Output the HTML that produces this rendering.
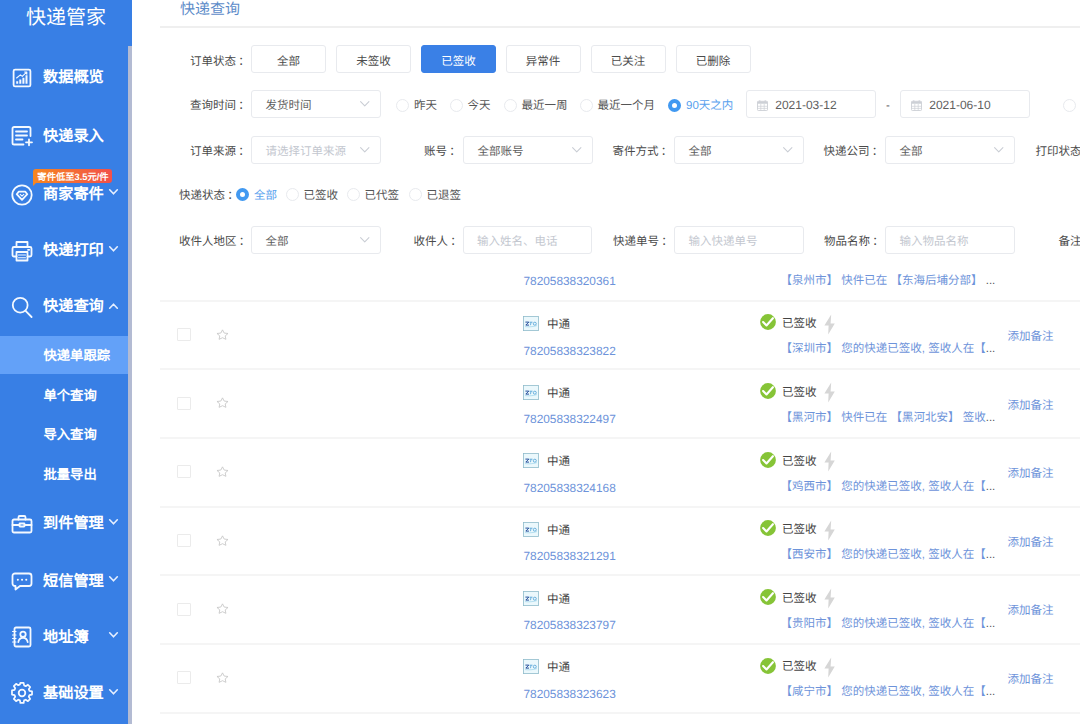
<!DOCTYPE html>
<html lang="zh-CN">
<head>
<meta charset="utf-8">
<title>快递管家 - 快递查询</title>
<style>
*{margin:0;padding:0;box-sizing:border-box}
html,body{width:1080px;height:724px;overflow:hidden;background:#fff}
body{text-rendering:geometricPrecision;font-family:"Liberation Sans",sans-serif;font-size:12px;color:#4a4a4a;line-height:16px}
#app{position:relative;width:1080px;height:724px;overflow:hidden;background:#fff}
svg{display:block;position:absolute;overflow:visible}
/* ---------- sidebar ---------- */
.side{position:absolute;left:0;top:0;width:128px;height:724px;background:#387fe5;color:#fff}
.side-top{position:absolute;left:0;top:0;width:132px;height:46px;background:#387fe5}
.scroll{position:absolute;left:128px;top:46px;width:4px;height:678px;background:#b3bbd3}
.logo{position:absolute;left:0;top:6px;width:132px;text-align:center;font-size:20px;line-height:24px;color:#fff;letter-spacing:0}
.mi{position:absolute;left:43px;margin-top:1.2px;font-size:15.2px;line-height:20px;font-weight:bold;color:#fff;white-space:nowrap}
.si{position:absolute;left:43.5px;margin-top:.6px;font-size:13.3px;line-height:18px;font-weight:bold;color:#fff;white-space:nowrap}
.act{position:absolute;left:0;top:336px;width:128px;height:38px;background:#63a1f8}
.ico{left:10.5px;width:22px;height:22px;fill:none;stroke:#f4f9ff;stroke-width:1.8;stroke-linecap:round;stroke-linejoin:round}
.chev{left:109px;margin-top:.7px;width:9px;height:6px;fill:none;stroke:#e6efff;stroke-width:1.6;stroke-linecap:round;stroke-linejoin:round}
.tag{position:absolute;left:32.5px;top:168.5px;width:79px;height:14px;border-radius:3px 3px 3px 0;background:linear-gradient(90deg,#f6861f 0%,#f2504b 100%);color:#fff;font-weight:bold;font-size:9.3px;line-height:16.5px;padding-left:2px;text-align:center;white-space:nowrap}
.tag:after{content:"";position:absolute;left:0;top:14px;border-top:3px solid #f6861f;border-right:3px solid transparent}
/* ---------- main ---------- */
.main{position:absolute;left:0;top:0;width:1080px;height:724px}
.title{position:absolute;left:180px;top:1px;font-size:15px;line-height:18px;color:#5d8cc9;white-space:nowrap}
.title-line{position:absolute;left:160px;top:26px;width:920px;height:2px;background:#efefef}
.lb i{font-style:normal;margin-left:2.3px}
.lb{position:absolute;margin-top:.6px;font-size:11.5px;line-height:16px;color:#4a4a4a;white-space:nowrap}
.btn{position:absolute;top:45px;width:75px;height:28px;border:1px solid #e8eaee;border-radius:3px;background:#fff;text-align:center;font-size:11.5px;line-height:32.5px;color:#4c4c4c;white-space:nowrap}
.btn.on{background:#3a80e6;border-color:#3a80e6;color:#fff}
.sel{position:absolute;width:129.5px;height:28px;border:1px solid #e8eaee;border-radius:3px;background:#fff;font-size:11.5px;line-height:30px;color:#5e5e5e;padding-left:13.4px;overflow:hidden;white-space:nowrap}
.sel.ph{color:#c3c7cf}
.sel svg{right:10.5px;top:10px;width:9.5px;height:5.7px;fill:none;stroke:#c9cdd4;stroke-width:1.1;stroke-linecap:round;stroke-linejoin:round}
.sel.date{padding-left:28.25px;color:#606060;font-size:12px;line-height:29.5px}
.sel.date svg{left:9.5px;right:auto;top:9px;width:11px;height:11px;stroke:#cdd0d6;stroke-width:.9;stroke-linecap:butt}
.rd{position:absolute;width:13px;height:13px;border:1px solid #e8eaee;border-radius:50%;background:#fff}
.rd.on{border:4.6px solid #4199f1;background:#fff}
.rl{position:absolute;margin-top:.6px;font-size:11.5px;line-height:16px;color:#555;white-space:nowrap}
.rl.on{color:#58a1ee}
/* ---------- table ---------- */
.sep{position:absolute;left:160px;width:920px;height:2px;background:#f5f5f5}
.num,.trk{position:absolute;font-size:11.5px;line-height:16px;color:#6d93da;white-space:nowrap}
.num{font-size:11.85px}
.num{left:523.5px}
.trk{left:780.600px;width:218px;overflow:hidden}
.row{position:absolute;left:0;top:0;width:1080px;height:0}
.cb{position:absolute;left:177px;width:14px;height:13px;border:1px solid #ebebeb;border-radius:1px;background:#fff}
.star{left:216.200px;width:13px;height:11.600px}
.zto{left:523px;width:16px;height:15px}
.co{position:absolute;left:547px;font-size:11.5px;line-height:16px;color:#444;white-space:nowrap}
.num2{position:absolute;left:523.5px;font-size:11.85px;line-height:16px;color:#6d93da;white-space:nowrap}
.ok{left:759.800px;width:16px;height:16px}
.st{position:absolute;left:782px;font-size:11.5px;line-height:16px;color:#444;white-space:nowrap}
.bolt{left:824px;width:11px;height:21px}
.trk2{position:absolute;left:780.600px;width:218px;overflow:hidden;font-size:11.5px;line-height:16px;color:#6d93da;white-space:nowrap}
.note{position:absolute;left:1007.5px;font-size:11.5px;line-height:16px;color:#6d93da;white-space:nowrap}
.trk em,.trk2 em{font-style:normal;color:#555}

</style>
</head>
<body>
<div id="app">
<div class="side">
<div class="side-top"></div>
<div class="scroll"></div>
<div class="logo">快递管家</div>

<svg class="ico" style="top:67px" viewBox="0 0 22 22"><rect x="2.6" y="2.6" width="16.8" height="16.8" rx="1.5"/><path d="M6.2 16.8v-2.6M9.3 16.8v-4.4M12.4 16.8v-6M15.5 16.8V8.2" stroke-width="2" stroke-linecap="butt"/><path d="M5.6 11l3.800-3.100 1.900 1.500 4.300-4.200M13.600 5h2.200v2.200" stroke-width="1.1"/></svg>
<div class="mi" style="top:66.5px">数据概览</div>

<svg class="ico" style="top:125px" viewBox="0 0 22 22"><path d="M19.500 11V3.600A1.600 1.600 0 0 0 17.900 2H3.100A1.600 1.600 0 0 0 1.500 3.600v14.300A1.600 1.600 0 0 0 3.100 19.500H12.500"/><path d="M5 6.500h11M5 10.500h11M5 14.500h6.500"/><path d="M18 14.300v6M15 17.300h6"/></svg>
<div class="mi" style="top:126px">快递录入</div>

<div class="tag">寄件低至3.5元/件</div>
<svg class="ico" style="top:183.500px" viewBox="0 0 22 22"><circle cx="11" cy="11" r="9.700"/><path d="M7.800 7.600h6.400l2.100 2.600-5.300 5.600-5.300-5.600z"/><path d="M9.200 10.400l1.800 1.800 1.800-1.800" stroke-width="1.1"/></svg>
<div class="mi" style="top:184px">商家寄件</div>
<svg class="chev" style="top:188px" viewBox="0 0 9 6"><path d="M0.700 0.800L4.500 4.800 8.300 0.800"/></svg>

<svg class="ico" style="top:239.500px" viewBox="0 0 22 22"><path d="M5.500 7V2h11v5"/><path d="M5.500 16.500H3A1.500 1.500 0 0 1 1.500 15V8.500A1.500 1.500 0 0 1 3 7h16a1.500 1.500 0 0 1 1.500 1.500V15a1.500 1.500 0 0 1-1.500 1.500h-2.500"/><rect x="5.500" y="12" width="11" height="8.500"/><path d="M7.500 15h7M7.500 17.800h7" stroke-width="1.100"/><path d="M17 9.800h1.200"/></svg>
<div class="mi" style="top:240px">快递打印</div>
<svg class="chev" style="top:245px" viewBox="0 0 9 6"><path d="M0.700 0.800L4.500 4.800 8.300 0.800"/></svg>

<svg class="ico" style="top:295.500px" viewBox="0 0 22 22"><circle cx="9.200" cy="9.200" r="7.400"/><path d="M14.600 14.800l6 6.200"/></svg>
<div class="mi" style="top:296px">快递查询</div>
<svg class="chev" style="top:302px" viewBox="0 0 9 6"><path d="M0.700 5.200L4.500 1.200 8.300 5.200"/></svg>

<div class="act"></div>
<div class="si" style="top:346.500px">快递单跟踪</div>
<div class="si" style="top:386px">单个查询</div>
<div class="si" style="top:425.500px">导入查询</div>
<div class="si" style="top:465px">批量导出</div>

<svg class="ico" style="top:512.500px" viewBox="0 0 22 22"><rect x="1.500" y="6.500" width="19" height="13" rx="1.500"/><path d="M7.500 6.500V4.200A1.200 1.200 0 0 1 8.700 3h4.600a1.200 1.200 0 0 1 1.200 1.200v2.300"/><path d="M1.500 12h7M13.500 12h7"/><rect x="8.500" y="10.500" width="5" height="3" rx="0.500"/></svg>
<div class="mi" style="top:513px">到件管理</div>
<svg class="chev" style="top:518px" viewBox="0 0 9 6"><path d="M0.700 0.800L4.500 4.800 8.300 0.800"/></svg>

<svg class="ico" style="top:569.500px" viewBox="0 0 22 22"><path d="M4 3.500h14A2.500 2.500 0 0 1 20.500 6v7.500A2.500 2.500 0 0 1 18 16H9l-4.500 3.500V16H4a2.500 2.500 0 0 1-2.500-2.500V6A2.500 2.500 0 0 1 4 3.500z"/><path d="M6.800 9.800h.1M11 9.800h.1M15.200 9.800h.1" stroke-width="2"/></svg>
<div class="mi" style="top:570.500px">短信管理</div>
<svg class="chev" style="top:575px" viewBox="0 0 9 6"><path d="M0.700 0.800L4.500 4.800 8.300 0.800"/></svg>

<svg class="ico" style="top:626px" viewBox="0 0 22 22"><rect x="3.500" y="1.500" width="16" height="19" rx="1.500"/><path d="M1.500 5.500h3.500M1.500 9h3.500M1.500 12.500h3.500M1.500 16h3.500" stroke-width="1.200"/><circle cx="12" cy="8.300" r="2.700"/><path d="M7.300 16.200c.4-3 2.300-4.400 4.700-4.400s4.300 1.400 4.700 4.400"/></svg>
<div class="mi" style="top:627px">地址簿</div>
<svg class="chev" style="top:631px" viewBox="0 0 9 6"><path d="M0.700 0.800L4.500 4.800 8.300 0.800"/></svg>

<svg class="ico" style="top:682px" viewBox="0 0 22 22"><path d="M9.300 1.500h3.400l.5 2.700 1.700.8 2.300-1.500 2.400 2.400-1.500 2.300.7 1.700 2.700.5v3.400l-2.700.5-.7 1.700 1.500 2.300-2.400 2.400-2.300-1.500-1.700.7-.5 2.700H9.300l-.5-2.700-1.700-.7-2.300 1.500-2.400-2.400 1.500-2.300-.7-1.700-2.700-.5V9.400l2.700-.5.700-1.700L2.400 4.900l2.400-2.400L7.100 4l1.700-.8z" transform="translate(0.500 -0.600) scale(0.955)"/><circle cx="11" cy="11" r="3.300"/></svg>
<div class="mi" style="top:683px">基础设置</div>
<svg class="chev" style="top:688px" viewBox="0 0 9 6"><path d="M0.700 0.800L4.500 4.800 8.300 0.800"/></svg>
</div>

<div class="main">
<div class="title">快递查询</div>
<div class="title-line"></div>
<!-- row 1 : 订单状态 -->
<div class="lb" style="left:190px;top:53px">订单状态<i>：</i></div>
<div class="btn" style="left:251px">全部</div>
<div class="btn" style="left:336px">未签收</div>
<div class="btn on" style="left:421px">已签收</div>
<div class="btn" style="left:505.5px">异常件</div>
<div class="btn" style="left:590.5px">已关注</div>
<div class="btn" style="left:675.5px">已删除</div>

<!-- row 2 : 查询时间 -->
<div class="lb" style="left:190px;top:97.75px">查询时间<i>：</i></div>
<div class="sel" style="left:251px;top:90px">发货时间<svg viewBox="0 0 10 6"><path d="M0.600 0.700L5 5.200 9.400 0.700"/></svg></div>
<span class="rd" style="left:396px;top:98.500px"></span><span class="rl" style="left:414px;top:97.75px">昨天</span>
<span class="rd" style="left:449.500px;top:98.500px"></span><span class="rl" style="left:467.500px;top:97.75px">今天</span>
<span class="rd" style="left:503.500px;top:98.500px"></span><span class="rl" style="left:521.500px;top:97.75px">最近一周</span>
<span class="rd" style="left:580px;top:98.500px"></span><span class="rl" style="left:597.500px;top:97.75px">最近一个月</span>
<span class="rd on" style="left:668px;top:98.500px"></span><span class="rl on" style="left:686px;top:97.75px">90天之内</span>
<div class="sel date" style="left:746px;top:90px">2021-03-12<svg viewBox="0 0 11 11"><rect x="0.500" y="1.300" width="10" height="9.200" rx="0.800"/><path d="M0.500 2.700h10" stroke-width="2.200"/><path d="M0.500 6.300h10M0.500 8.400h10M3.800 4v6.500M7.200 4v6.500" stroke-width="0.700"/><path d="M2.800 0.300v1.500M8.200 0.300v1.500" stroke-width="1.100"/></svg></div>
<div class="lb" style="left:886px;top:97.75px">-</div>
<div class="sel date" style="left:900px;top:90px">2021-06-10<svg viewBox="0 0 11 11"><rect x="0.500" y="1.300" width="10" height="9.200" rx="0.800"/><path d="M0.500 2.700h10" stroke-width="2.200"/><path d="M0.500 6.300h10M0.500 8.400h10M3.800 4v6.500M7.200 4v6.500" stroke-width="0.700"/><path d="M2.800 0.300v1.500M8.200 0.300v1.500" stroke-width="1.100"/></svg></div>
<span class="rd" style="left:1062.500px;top:98.500px"></span>

<!-- row 3 : 订单来源 / 账号 / 寄件方式 / 快递公司 / 打印状态 -->
<div class="lb" style="left:190px;top:143.75px">订单来源<i>：</i></div>
<div class="sel ph" style="left:251px;top:136px">请选择订单来源<svg viewBox="0 0 10 6"><path d="M0.600 0.700L5 5.200 9.400 0.700"/></svg></div>
<div class="lb" style="left:424px;top:143.75px">账号<i>：</i></div>
<div class="sel" style="left:463px;top:136px">全部账号<svg viewBox="0 0 10 6"><path d="M0.600 0.700L5 5.200 9.400 0.700"/></svg></div>
<div class="lb" style="left:612.500px;top:143.75px">寄件方式<i>：</i></div>
<div class="sel" style="left:674px;top:136px">全部<svg viewBox="0 0 10 6"><path d="M0.600 0.700L5 5.200 9.400 0.700"/></svg></div>
<div class="lb" style="left:823.500px;top:143.75px">快递公司<i>：</i></div>
<div class="sel" style="left:885px;top:136px">全部<svg viewBox="0 0 10 6"><path d="M0.600 0.700L5 5.200 9.400 0.700"/></svg></div>
<div class="lb" style="left:1035.500px;top:143.75px">打印状态<i>：</i></div>

<!-- row 4 : 快递状态 -->
<div class="lb" style="left:179px;top:187px">快递状态<i>：</i></div>
<span class="rd on" style="left:236px;top:187.500px"></span><span class="rl on" style="left:254px;top:187px">全部</span>
<span class="rd" style="left:285.500px;top:187.500px"></span><span class="rl" style="left:303.500px;top:187px">已签收</span>
<span class="rd" style="left:347px;top:187.500px"></span><span class="rl" style="left:364.500px;top:187px">已代签</span>
<span class="rd" style="left:408.500px;top:187.500px"></span><span class="rl" style="left:426.500px;top:187px">已退签</span>

<!-- row 5 : 收件人地区 / 收件人 / 快递单号 / 物品名称 / 备注 -->
<div class="lb" style="left:179px;top:233.75px">收件人地区<i>：</i></div>
<div class="sel" style="left:251px;top:226px">全部<svg viewBox="0 0 10 6"><path d="M0.600 0.700L5 5.200 9.400 0.700"/></svg></div>
<div class="lb" style="left:413.500px;top:233.75px">收件人<i>：</i></div>
<div class="sel ph" style="left:462.500px;top:226px">输入姓名、电话</div>
<div class="lb" style="left:613px;top:233.75px">快递单号<i>：</i></div>
<div class="sel ph" style="left:674px;top:226px">输入快递单号</div>
<div class="lb" style="left:824px;top:233.75px">物品名称<i>：</i></div>
<div class="sel ph" style="left:885px;top:226px">输入物品名称</div>
<div class="lb" style="left:1058.500px;top:233.75px">备注<i>：</i></div>

<div class="sep" style="top:300px"></div>
<div class="sep" style="top:368px"></div>
<div class="sep" style="top:437px"></div>
<div class="sep" style="top:506px"></div>
<div class="sep" style="top:574px"></div>
<div class="sep" style="top:643px"></div>
<div class="sep" style="top:712px"></div>
<div class="num" style="top:273.00px">78205838320361</div>
<div class="trk" style="top:272.50px">【泉州市】 快件已在 【东海后埔分部】 <em>...</em></div>
<div class="row">
<span class="cb" style="top:328px"></span>
<svg class="star" style="top:328.70px" viewBox="0 0 12 12" preserveAspectRatio="none"><path d="M6 0.9l1.55 3.3 3.55.45-2.6 2.5.65 3.55L6 9l-3.15 1.7.65-3.55-2.6-2.5 3.55-.45z" fill="none" stroke="#c6c6c6" stroke-width="0.85" stroke-linejoin="round"/></svg>
<svg class="zto" style="top:316.10px" viewBox="0 0 16 15"><rect x="0.400" y="0.400" width="15.200" height="14.200" fill="#ebf8fc" stroke="#8fbccb" stroke-width="0.800"/><path d="M2.400 6.100h3.400l-3 3h3.200" fill="none" stroke="#27509c" stroke-width="1"/><path d="M6.500 6.200h3M8 6.200l-.5 3" fill="none" stroke="#4d9fd6" stroke-width="0.800"/><ellipse cx="11.800" cy="7.700" rx="1.500" ry="1.500" fill="none" stroke="#4d9fd6" stroke-width="0.800"/><path d="M2 10.600c4 .5 8 .2 12-1" fill="none" stroke="#7fc4e2" stroke-width="0.500"/></svg>
<span class="co" style="top:317px">中通</span><span class="num2" style="top:343px">78205838323822</span>
<svg class="ok" style="top:314.40px" viewBox="0 0 16 16"><circle cx="8" cy="8" r="7.900" fill="#86c437"/><path d="M3.100 8l3.400 3.500 6.400-7.300" fill="none" stroke="#fff" stroke-width="2.100" stroke-linecap="round" stroke-linejoin="round"/></svg>
<span class="st" style="top:316px">已签收</span>
<svg class="bolt" style="top:313.70px" viewBox="0 0 11 20"><path d="M7.200 0L0.400 11H4.600L4.200 20 10.800 9H6.600z" fill="#d6d6d6"/></svg>
<span class="trk2" style="top:341px">【深圳市】 您的快递已签收, 签收人在【<em>...</em></span><span class="note" style="top:329px">添加备注</span>
</div>
<div class="row">
<span class="cb" style="top:397px"></span>
<svg class="star" style="top:397.32px" viewBox="0 0 12 12" preserveAspectRatio="none"><path d="M6 0.9l1.55 3.3 3.55.45-2.6 2.5.65 3.55L6 9l-3.15 1.7.65-3.55-2.6-2.5 3.55-.45z" fill="none" stroke="#c6c6c6" stroke-width="0.85" stroke-linejoin="round"/></svg>
<svg class="zto" style="top:384.72px" viewBox="0 0 16 15"><rect x="0.400" y="0.400" width="15.200" height="14.200" fill="#ebf8fc" stroke="#8fbccb" stroke-width="0.800"/><path d="M2.400 6.100h3.400l-3 3h3.200" fill="none" stroke="#27509c" stroke-width="1"/><path d="M6.500 6.200h3M8 6.200l-.5 3" fill="none" stroke="#4d9fd6" stroke-width="0.800"/><ellipse cx="11.800" cy="7.700" rx="1.500" ry="1.500" fill="none" stroke="#4d9fd6" stroke-width="0.800"/><path d="M2 10.600c4 .5 8 .2 12-1" fill="none" stroke="#7fc4e2" stroke-width="0.500"/></svg>
<span class="co" style="top:386px">中通</span><span class="num2" style="top:411px">78205838322497</span>
<svg class="ok" style="top:383.02px" viewBox="0 0 16 16"><circle cx="8" cy="8" r="7.900" fill="#86c437"/><path d="M3.100 8l3.400 3.500 6.400-7.300" fill="none" stroke="#fff" stroke-width="2.100" stroke-linecap="round" stroke-linejoin="round"/></svg>
<span class="st" style="top:385px">已签收</span>
<svg class="bolt" style="top:382.32px" viewBox="0 0 11 20"><path d="M7.200 0L0.400 11H4.600L4.200 20 10.800 9H6.600z" fill="#d6d6d6"/></svg>
<span class="trk2" style="top:410px">【黑河市】 快件已在 【黑河北安】 签收<em>...</em></span><span class="note" style="top:398px">添加备注</span>
</div>
<div class="row">
<span class="cb" style="top:465px"></span>
<svg class="star" style="top:465.94px" viewBox="0 0 12 12" preserveAspectRatio="none"><path d="M6 0.9l1.55 3.3 3.55.45-2.6 2.5.65 3.55L6 9l-3.15 1.7.65-3.55-2.6-2.5 3.55-.45z" fill="none" stroke="#c6c6c6" stroke-width="0.85" stroke-linejoin="round"/></svg>
<svg class="zto" style="top:453.34px" viewBox="0 0 16 15"><rect x="0.400" y="0.400" width="15.200" height="14.200" fill="#ebf8fc" stroke="#8fbccb" stroke-width="0.800"/><path d="M2.400 6.100h3.400l-3 3h3.200" fill="none" stroke="#27509c" stroke-width="1"/><path d="M6.500 6.200h3M8 6.200l-.5 3" fill="none" stroke="#4d9fd6" stroke-width="0.800"/><ellipse cx="11.800" cy="7.700" rx="1.500" ry="1.500" fill="none" stroke="#4d9fd6" stroke-width="0.800"/><path d="M2 10.600c4 .5 8 .2 12-1" fill="none" stroke="#7fc4e2" stroke-width="0.500"/></svg>
<span class="co" style="top:454px">中通</span><span class="num2" style="top:480px">78205838324168</span>
<svg class="ok" style="top:451.64px" viewBox="0 0 16 16"><circle cx="8" cy="8" r="7.900" fill="#86c437"/><path d="M3.100 8l3.400 3.500 6.400-7.300" fill="none" stroke="#fff" stroke-width="2.100" stroke-linecap="round" stroke-linejoin="round"/></svg>
<span class="st" style="top:454px">已签收</span>
<svg class="bolt" style="top:450.94px" viewBox="0 0 11 20"><path d="M7.200 0L0.400 11H4.600L4.200 20 10.800 9H6.600z" fill="#d6d6d6"/></svg>
<span class="trk2" style="top:479px">【鸡西市】 您的快递已签收, 签收人在【<em>...</em></span><span class="note" style="top:466px">添加备注</span>
</div>
<div class="row">
<span class="cb" style="top:534px"></span>
<svg class="star" style="top:534.56px" viewBox="0 0 12 12" preserveAspectRatio="none"><path d="M6 0.9l1.55 3.3 3.55.45-2.6 2.5.65 3.55L6 9l-3.15 1.7.65-3.55-2.6-2.5 3.55-.45z" fill="none" stroke="#c6c6c6" stroke-width="0.85" stroke-linejoin="round"/></svg>
<svg class="zto" style="top:521.96px" viewBox="0 0 16 15"><rect x="0.400" y="0.400" width="15.200" height="14.200" fill="#ebf8fc" stroke="#8fbccb" stroke-width="0.800"/><path d="M2.400 6.100h3.400l-3 3h3.200" fill="none" stroke="#27509c" stroke-width="1"/><path d="M6.500 6.200h3M8 6.200l-.5 3" fill="none" stroke="#4d9fd6" stroke-width="0.800"/><ellipse cx="11.800" cy="7.700" rx="1.500" ry="1.500" fill="none" stroke="#4d9fd6" stroke-width="0.800"/><path d="M2 10.600c4 .5 8 .2 12-1" fill="none" stroke="#7fc4e2" stroke-width="0.500"/></svg>
<span class="co" style="top:523px">中通</span><span class="num2" style="top:548px">78205838321291</span>
<svg class="ok" style="top:520.26px" viewBox="0 0 16 16"><circle cx="8" cy="8" r="7.900" fill="#86c437"/><path d="M3.100 8l3.400 3.500 6.400-7.300" fill="none" stroke="#fff" stroke-width="2.100" stroke-linecap="round" stroke-linejoin="round"/></svg>
<span class="st" style="top:522px">已签收</span>
<svg class="bolt" style="top:519.56px" viewBox="0 0 11 20"><path d="M7.200 0L0.400 11H4.600L4.200 20 10.800 9H6.600z" fill="#d6d6d6"/></svg>
<span class="trk2" style="top:547px">【西安市】 您的快递已签收, 签收人在【<em>...</em></span><span class="note" style="top:535px">添加备注</span>
</div>
<div class="row">
<span class="cb" style="top:603px"></span>
<svg class="star" style="top:603.18px" viewBox="0 0 12 12" preserveAspectRatio="none"><path d="M6 0.9l1.55 3.3 3.55.45-2.6 2.5.65 3.55L6 9l-3.15 1.7.65-3.55-2.6-2.5 3.55-.45z" fill="none" stroke="#c6c6c6" stroke-width="0.85" stroke-linejoin="round"/></svg>
<svg class="zto" style="top:590.58px" viewBox="0 0 16 15"><rect x="0.400" y="0.400" width="15.200" height="14.200" fill="#ebf8fc" stroke="#8fbccb" stroke-width="0.800"/><path d="M2.400 6.100h3.400l-3 3h3.200" fill="none" stroke="#27509c" stroke-width="1"/><path d="M6.500 6.200h3M8 6.200l-.5 3" fill="none" stroke="#4d9fd6" stroke-width="0.800"/><ellipse cx="11.800" cy="7.700" rx="1.500" ry="1.500" fill="none" stroke="#4d9fd6" stroke-width="0.800"/><path d="M2 10.600c4 .5 8 .2 12-1" fill="none" stroke="#7fc4e2" stroke-width="0.500"/></svg>
<span class="co" style="top:592px">中通</span><span class="num2" style="top:617px">78205838323797</span>
<svg class="ok" style="top:588.88px" viewBox="0 0 16 16"><circle cx="8" cy="8" r="7.900" fill="#86c437"/><path d="M3.100 8l3.400 3.500 6.400-7.300" fill="none" stroke="#fff" stroke-width="2.100" stroke-linecap="round" stroke-linejoin="round"/></svg>
<span class="st" style="top:591px">已签收</span>
<svg class="bolt" style="top:588.18px" viewBox="0 0 11 20"><path d="M7.200 0L0.400 11H4.600L4.200 20 10.800 9H6.600z" fill="#d6d6d6"/></svg>
<span class="trk2" style="top:616px">【贵阳市】 您的快递已签收, 签收人在【<em>...</em></span><span class="note" style="top:603px">添加备注</span>
</div>
<div class="row">
<span class="cb" style="top:671px"></span>
<svg class="star" style="top:671.80px" viewBox="0 0 12 12" preserveAspectRatio="none"><path d="M6 0.9l1.55 3.3 3.55.45-2.6 2.5.65 3.55L6 9l-3.15 1.7.65-3.55-2.6-2.5 3.55-.45z" fill="none" stroke="#c6c6c6" stroke-width="0.85" stroke-linejoin="round"/></svg>
<svg class="zto" style="top:659.20px" viewBox="0 0 16 15"><rect x="0.400" y="0.400" width="15.200" height="14.200" fill="#ebf8fc" stroke="#8fbccb" stroke-width="0.800"/><path d="M2.400 6.100h3.400l-3 3h3.200" fill="none" stroke="#27509c" stroke-width="1"/><path d="M6.500 6.200h3M8 6.200l-.5 3" fill="none" stroke="#4d9fd6" stroke-width="0.800"/><ellipse cx="11.800" cy="7.700" rx="1.500" ry="1.500" fill="none" stroke="#4d9fd6" stroke-width="0.800"/><path d="M2 10.600c4 .5 8 .2 12-1" fill="none" stroke="#7fc4e2" stroke-width="0.500"/></svg>
<span class="co" style="top:660px">中通</span><span class="num2" style="top:686px">78205838323623</span>
<svg class="ok" style="top:657.50px" viewBox="0 0 16 16"><circle cx="8" cy="8" r="7.900" fill="#86c437"/><path d="M3.100 8l3.400 3.500 6.400-7.300" fill="none" stroke="#fff" stroke-width="2.100" stroke-linecap="round" stroke-linejoin="round"/></svg>
<span class="st" style="top:659px">已签收</span>
<svg class="bolt" style="top:656.80px" viewBox="0 0 11 20"><path d="M7.200 0L0.400 11H4.600L4.200 20 10.800 9H6.600z" fill="#d6d6d6"/></svg>
<span class="trk2" style="top:684px">【咸宁市】 您的快递已签收, 签收人在【<em>...</em></span><span class="note" style="top:672px">添加备注</span>
</div>
</div>
</div>
</body>
</html>
